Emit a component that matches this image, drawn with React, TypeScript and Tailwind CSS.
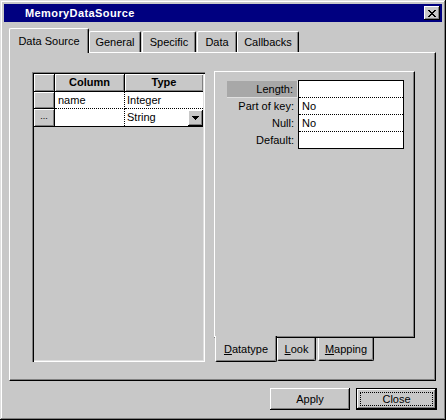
import React from "react";

const raised = "shadow-[inset_-1px_-1px_#000,inset_1px_1px_#fff,inset_-2px_-2px_#808080]";
const cellRaised = "shadow-[inset_1px_1px_#fff,inset_-1px_-1px_#808080]";

const xPixels: [number, number][] = [
  [0, 0], [1, 0], [6, 0], [7, 0],
  [1, 1], [2, 1], [5, 1], [6, 1],
  [2, 2], [3, 2], [4, 2], [5, 2],
  [3, 3], [4, 3],
  [2, 4], [3, 4], [4, 4], [5, 4],
  [1, 5], [2, 5], [5, 5], [6, 5],
  [0, 6], [1, 6], [6, 6], [7, 6],
];

function TitleBar() {
  return (
    <div className="h-[18px] bg-[#000080] flex items-center justify-between pl-[21px] pr-[2px]">
      <span className="text-white font-bold text-[11px] tracking-[0.4px]">MemoryDataSource</span>
      <div className={`w-[16px] h-[14px] bg-[#c8c8c8] flex items-center justify-center ${raised}`}>
        <svg width="8" height="7" viewBox="0 0 8 7" shapeRendering="crispEdges">
          {xPixels.map(([x, y]) => (
            <rect key={`${x}-${y}`} x={x} y={y} width="1" height="1" fill="#000" />
          ))}
        </svg>
      </div>
    </div>
  );
}

const topTabs = [
  { label: "Data Source", w: "w-[80px]", active: true, ml: "" },
  { label: "General", w: "w-[52px]", active: false, ml: "" },
  { label: "Specific", w: "w-[54px]", active: false, ml: "ml-[1px]" },
  { label: "Data", w: "w-[40px]", active: false, ml: "ml-[1px]" },
  { label: "Callbacks", w: "w-[62px]", active: false, ml: "" },
];

function TopTabs() {
  return (
    <div className="flex items-end h-[24px]">
      {topTabs.map((t) =>
        t.active ? (
          <div
            key={t.label}
            className={`${t.w} ${t.ml} h-[25px] -mb-[1px] relative z-10 bg-[#c8c8c8] border-t border-l border-r border-t-white border-l-white border-r-black rounded-t-[2px] shadow-[inset_-1px_0_#808080] flex items-center justify-center pt-[1px]`}
          >
            {t.label}
          </div>
        ) : (
          <div
            key={t.label}
            className={`${t.w} ${t.ml} h-[21px] border-t border-l border-r border-t-white border-l-white border-r-black rounded-t-[2px] shadow-[inset_-1px_0_#808080] flex items-center justify-center`}
          >
            {t.label}
          </div>
        )
      )}
    </div>
  );
}

function ColumnGrid() {
  return (
    <div className="w-[173px] h-[290px] p-[2px] shadow-[inset_1px_1px_#808080,inset_2px_2px_#000,inset_-1px_-1px_#fff,inset_-2px_-2px_#dfdfdf]">
      {/* header */}
      <div className="flex h-[18px] border-b border-black">
        <div className={`w-[21px] border-r border-black ${cellRaised}`} />
        <div className={`w-[70px] border-r border-black flex items-center justify-center font-bold ${cellRaised}`}>
          Column
        </div>
        <div className={`flex-1 flex items-center justify-center font-bold ${cellRaised}`}>Type</div>
      </div>
      {/* rows */}
      <div className="border-b border-black">
        <div className="flex h-[17px]">
          <div className={`w-[21px] border-r border-b border-black ${cellRaised}`} />
          <div className="w-[70px] bg-white border-r border-b border-dotted border-black flex items-center pl-[3px]">
            name
          </div>
          <div className="flex-1 bg-white border-b border-dotted border-black flex items-center pl-[2px]">
            Integer
          </div>
        </div>
        <div className="flex h-[17px]">
          <div className={`w-[21px] border-r border-black flex items-center justify-center text-[9px] leading-none pb-[3px] ${cellRaised}`}>
            ...
          </div>
          <div className="w-[70px] bg-white border-r border-dotted border-black" />
          <div className="flex-1 bg-white flex items-center justify-between pl-[2px]">
            <span>String</span>
            <div className={`w-[15px] h-[16px] bg-[#c8c8c8] flex items-center justify-center ${raised}`}>
              <svg width="7" height="4" viewBox="0 0 7 4" shapeRendering="crispEdges">
                <path d="M0 0h7v1h-7zM1 1h5v1h-5zM2 2h3v1h-3zM3 3h1v1h-1z" fill="#000" />
              </svg>
            </div>
          </div>
        </div>
      </div>
    </div>
  );
}

const props = [
  { label: "Length:", value: "", hl: true },
  { label: "Part of key:", value: "No", hl: false },
  { label: "Null:", value: "No", hl: false },
  { label: "Default:", value: "", hl: false },
];

function PropertyGrid() {
  return (
    <div className="flex items-start">
      <div className="w-[71px] flex flex-col pt-[1px]">
        {props.map((p) => (
          <div
            key={p.label}
            className={`h-[17px] flex items-center justify-end pr-[4px] ${
              p.hl ? "bg-[#a8a8a8] border-b border-r border-b-[#e0e0e0] border-r-[#e0e0e0]" : ""
            }`}
          >
            {p.label}
          </div>
        ))}
      </div>
      <div className="w-[106px] border border-black bg-white">
        {props.map((p, i) => (
          <div
            key={p.label}
            className={`flex items-center pl-[3px] ${i < 3 ? "h-[17px] border-b border-dotted border-black" : "h-[16px]"}`}
          >
            {p.value}
          </div>
        ))}
      </div>
    </div>
  );
}

function BottomTabs() {
  return (
    <div className="flex items-start">
      <div className="ml-[1px] -mt-[2px] w-[62px] h-[26px] relative z-10 bg-[#c8c8c8] border-l border-b border-r border-l-white border-b-black border-r-black rounded-b-[2px] shadow-[inset_-1px_-1px_#808080] flex items-center justify-center pt-[1px]">
        <span>
          <span className="underline">D</span>atatype
        </span>
      </div>
      <div className="w-[39px] h-[23px] border-l border-b border-r border-l-white border-b-black border-r-black rounded-b-[2px] shadow-[inset_-1px_-1px_#808080] flex items-center justify-center">
        <span>
          <span className="underline">L</span>ook
        </span>
      </div>
      <div className="ml-[2px] w-[56px] h-[23px] border-l border-b border-r border-l-white border-b-black border-r-black rounded-b-[2px] shadow-[inset_-1px_-1px_#808080] flex items-center justify-center">
        <span>
          <span className="underline">M</span>apping
        </span>
      </div>
    </div>
  );
}

export default function App() {
  return (
    <div className="w-[446px] h-[420px] bg-[#c8c8c8] p-[4px] flex flex-col text-[11px] text-black font-['Liberation_Sans',Arial,sans-serif] shadow-[inset_-1px_-1px_#000,inset_1px_1px_#dfdfdf,inset_-2px_-2px_#808080,inset_2px_2px_#fff]">
      <TitleBar />

      <div className="pl-[5px] pt-[6px] flex flex-col">
        <TopTabs />
        {/* Data Source page */}
        <div className="w-[427px] h-[329px] border border-t-white border-l-white border-r-black border-b-black shadow-[inset_-1px_-1px_#808080] flex items-start pl-[22px] pt-[19px]">
          <ColumnGrid />
          <div className="ml-[9px] -mt-[1px] w-[201px] flex flex-col">
            <div className="h-[267px] border border-t-white border-l-white border-r-black border-b-black shadow-[inset_-1px_-1px_#808080] pl-[12px] pt-[8px]">
              <PropertyGrid />
            </div>
            <BottomTabs />
          </div>
        </div>
      </div>

      {/* dialog buttons */}
      <div className="flex justify-end gap-[6px] mt-[7px] pr-[5px]">
        <button className={`w-[80px] h-[22px] bg-[#c8c8c8] flex items-center justify-center ${raised}`}>Apply</button>
        <button className="w-[81px] h-[22px] bg-[#c8c8c8] border border-black flex">
          <div className={`flex-1 flex p-[3px] ${raised}`}>
            <div className="flex-1 border border-dotted border-black flex items-center justify-center leading-none">
              Close
            </div>
          </div>
        </button>
      </div>
    </div>
  );
}
